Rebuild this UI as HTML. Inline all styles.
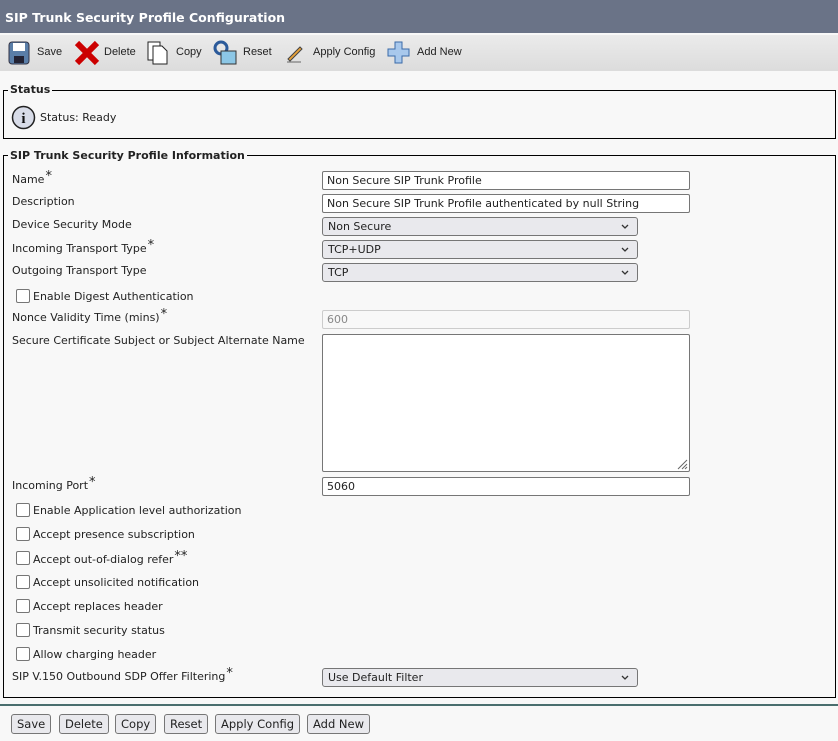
<!DOCTYPE html>
<html><head><meta charset="utf-8"><style>
body{margin:0;width:838px;height:741px;background:#f8f8f8;font-family:"DejaVu Sans","Liberation Sans",sans-serif;font-size:11px;color:#222;position:relative;overflow:hidden}
.a{position:absolute;white-space:nowrap}
.hdr{left:0;top:0;width:838px;height:33px;background:#6a7387}
.hdr span{position:absolute;left:5px;top:10px;color:#fff;font-weight:bold;font-size:12.5px}
.tb{left:0;top:35px;width:838px;height:36px;background:linear-gradient(#ebebeb,#dcdcdc)}
.tbt{font-family:"Liberation Sans",sans-serif;font-size:11px;top:46px}
.fs{border:1px solid #000;}
.lg{font-weight:bold;background:#f8f8f8;padding:0 2px}
.inp{position:absolute;left:322px;width:366px;height:17px;border:1px solid #767676;background:#fff;border-radius:2px}
.inp span{position:absolute;left:4px;top:2px}
.sel{position:absolute;left:322px;width:314px;height:17px;border:1px solid #767676;background:#e9e9ed;border-radius:3px}
.sel span{position:absolute;left:5px;top:2px}
.sel svg{position:absolute;right:8px;top:6px}
.cb{position:absolute;left:16px;width:12px;height:12px;border:1px solid #767676;border-radius:2px;background:#fff}
.btn{position:absolute;top:714px;height:18px;border:1px solid #767676;border-radius:3px;background:#e9e9ed;font-size:11.5px;line-height:18px;padding:0 5px}
b.s{font-weight:normal;font-size:13px;position:relative;top:-3px;margin-left:1px}
</style></head><body>
<div class="a hdr"><span>SIP Trunk Security Profile Configuration</span></div>
<div class="a tb"></div>
<svg class="a" style="left:8px;top:41px" width="22" height="24"><rect x="1" y="1" width="20" height="22" rx="3" fill="#5a7ea8" stroke="#334"/><rect x="5" y="2" width="12" height="8" fill="#fff"/><rect x="6" y="15" width="10" height="7" fill="#223"/></svg>
<div class="a tbt" style="left:37px">Save</div>
<svg class="a" style="left:74px;top:40px" width="26" height="26"><path d="M3 3L23 23M23 3L3 23" stroke="#c00" stroke-width="6"/></svg>
<div class="a tbt" style="left:104px">Delete</div>
<svg class="a" style="left:147px;top:41px" width="22" height="24"><rect x="1" y="1" width="12" height="18" fill="#fff" stroke="#222"/><path d="M6 5H15L20 10V23H6Z" fill="#fff" stroke="#222"/></svg>
<div class="a tbt" style="left:176px">Copy</div>
<svg class="a" style="left:212px;top:40px" width="28" height="26"><circle cx="9" cy="8" r="6" fill="none" stroke="#2b5a9a" stroke-width="3"/><rect x="9" y="11" width="15" height="13" fill="#8cc7e6" stroke="#333"/></svg>
<div class="a tbt" style="left:243px">Reset</div>
<svg class="a" style="left:285px;top:43px" width="20" height="20"><path d="M3 16L15 4L17 6L5 18Z" fill="#e9a33a" stroke="#444"/><path d="M2 19H16" stroke="#666"/></svg>
<div class="a tbt" style="left:313px">Apply Config</div>
<svg class="a" style="left:387px;top:41px" width="24" height="24"><path d="M8 1H15V8H22V15H15V22H8V15H1V8H8Z" fill="#a8c8ec" stroke="#3a6aa8"/></svg>
<div class="a tbt" style="left:417px">Add New</div>

<div class="a fs" style="left:3px;top:90px;width:831px;height:47px"></div>
<div class="a lg" style="left:8px;top:83px">Status</div>
<svg class="a" style="left:11px;top:105px" width="25" height="25"><circle cx="12.5" cy="12.5" r="11" fill="#d8dce8" stroke="#222" stroke-width="1.5"/><text x="12.5" y="18" text-anchor="middle" font-family="Liberation Serif" font-weight="bold" font-size="15" fill="#111">i</text></svg>
<div class="a" style="left:40px;top:111px">Status: Ready</div>

<div class="a fs" style="left:3px;top:155px;width:831px;height:541px"></div>
<div class="a lg" style="left:8px;top:149px">SIP Trunk Security Profile Information</div>

<div class="a" style="left:12px;top:172px">Name<b class="s">*</b></div>
<div class="inp" style="top:171px"><span>Non Secure SIP Trunk Profile</span></div>
<div class="a" style="left:12px;top:195px">Description</div>
<div class="inp" style="top:194px"><span>Non Secure SIP Trunk Profile authenticated by null String</span></div>
<div class="a" style="left:12px;top:218px">Device Security Mode</div>
<div class="sel" style="top:217px"><span>Non Secure</span><svg width="8" height="6"><path d="M1 1L4 4L7 1" stroke="#333" fill="none" stroke-width="1.3"/></svg></div>
<div class="a" style="left:12px;top:241px">Incoming Transport Type<b class="s">*</b></div>
<div class="sel" style="top:240px"><span>TCP+UDP</span><svg width="8" height="6"><path d="M1 1L4 4L7 1" stroke="#333" fill="none" stroke-width="1.3"/></svg></div>
<div class="a" style="left:12px;top:264px">Outgoing Transport Type</div>
<div class="sel" style="top:263px"><span>TCP</span><svg width="8" height="6"><path d="M1 1L4 4L7 1" stroke="#333" fill="none" stroke-width="1.3"/></svg></div>
<div class="cb" style="top:289px"></div><div class="a" style="left:33px;top:290px">Enable Digest Authentication</div>
<div class="a" style="left:12px;top:310px">Nonce Validity Time (mins)<b class="s">*</b></div>
<div class="inp" style="top:310px;background:#f8f8f8;border-color:#ccc"><span style="color:#888">600</span></div>
<div class="a" style="left:12px;top:334px">Secure Certificate Subject or Subject Alternate Name</div>
<div class="inp" style="top:334px;height:136px"><svg style="position:absolute;right:1px;bottom:1px" width="12" height="12"><path d="M11 2L2 11M11 6L6 11M11 9L9 11" stroke="#666"/></svg></div>
<div class="a" style="left:12px;top:478px">Incoming Port<b class="s">*</b></div>
<div class="inp" style="top:477px"><span>5060</span></div>
<div class="cb" style="top:503px"></div><div class="a" style="left:33px;top:504px">Enable Application level authorization</div>
<div class="cb" style="top:527px"></div><div class="a" style="left:33px;top:528px">Accept presence subscription</div>
<div class="cb" style="top:551px"></div><div class="a" style="left:33px;top:552px">Accept out-of-dialog refer<b class="s">**</b></div>
<div class="cb" style="top:575px"></div><div class="a" style="left:33px;top:576px">Accept unsolicited notification</div>
<div class="cb" style="top:599px"></div><div class="a" style="left:33px;top:600px">Accept replaces header</div>
<div class="cb" style="top:623px"></div><div class="a" style="left:33px;top:624px">Transmit security status</div>
<div class="cb" style="top:647px"></div><div class="a" style="left:33px;top:648px">Allow charging header</div>
<div class="a" style="left:12px;top:669px">SIP V.150 Outbound SDP Offer Filtering<b class="s">*</b></div>
<div class="sel" style="top:668px"><span>Use Default Filter</span><svg width="8" height="6"><path d="M1 1L4 4L7 1" stroke="#333" fill="none" stroke-width="1.3"/></svg></div>

<div class="a" style="left:0;top:704px;width:838px;height:2px;background:#4a6e6e"></div>
<div class="btn" style="left:11px">Save</div>
<div class="btn" style="left:59px">Delete</div>
<div class="btn" style="left:115px">Copy</div>
<div class="btn" style="left:164px">Reset</div>
<div class="btn" style="left:215px">Apply Config</div>
<div class="btn" style="left:307px">Add New</div>
</body></html>
